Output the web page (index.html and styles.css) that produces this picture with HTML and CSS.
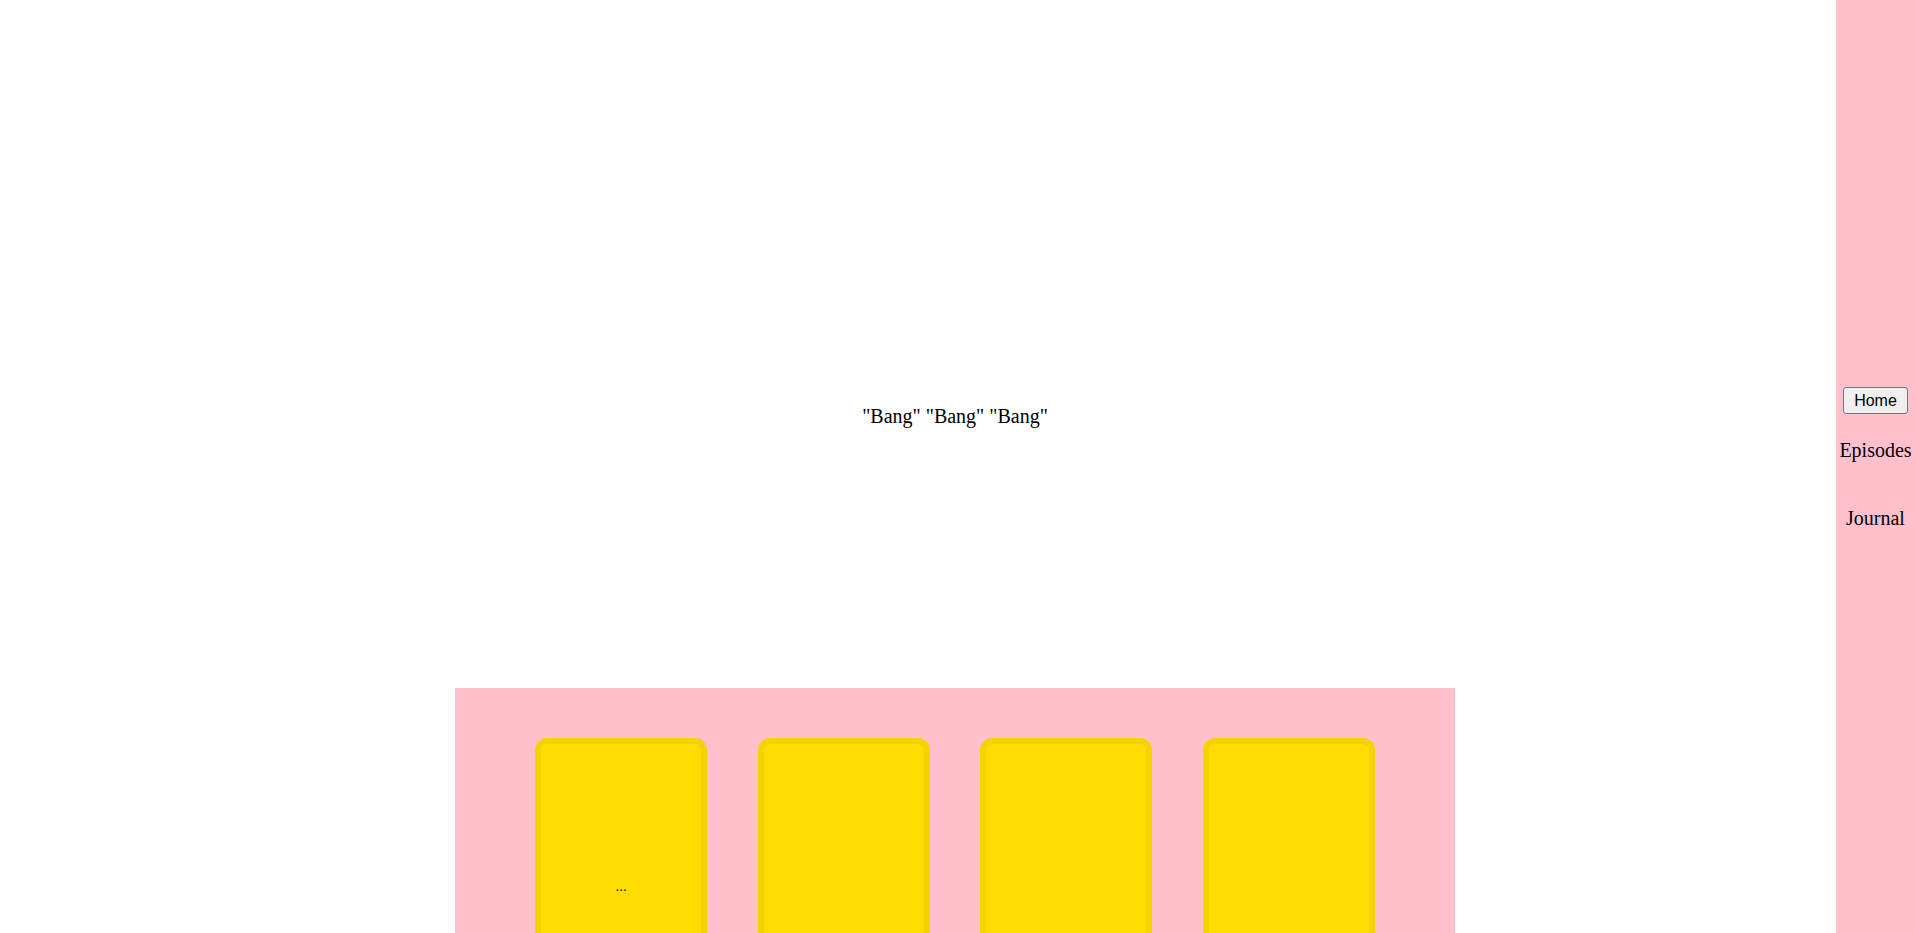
FILE: index.html
```html
<!DOCTYPE html>
<html>
<head>
<meta charset="utf-8">
<title>Bang</title>
<link rel="stylesheet" href="styles.css">
</head>
<body>
  <main class="page">
    <section class="hero">
      <p class="hero-text">"Bang" "Bang" "Bang"</p>
    </section>
    <section class="shelf">
      <div class="card"><span class="card-text">...</span></div>
      <div class="card"></div>
      <div class="card"></div>
      <div class="card"></div>
    </section>
  </main>
  <nav class="sidebar">
    <button class="home-btn" type="button">Home</button>
    <span class="nav-link nav-episodes">Episodes</span>
    <span class="nav-link nav-journal">Journal</span>
  </nav>
</body>
</html>
```

FILE: styles.css
```css
html, body {
  margin: 0;
  padding: 0;
  background: #ffffff;
}

body {
  font-family: "Liberation Serif", "Times New Roman", serif;
  color: #000;
}

.page {
  width: 1910px;
}

.hero {
  height: 688px;
  box-sizing: border-box;
  padding-top: 144px;
  display: flex;
  align-items: center;
  justify-content: center;
}

.hero-text {
  margin: 0;
  font-size: 20px;
  line-height: 23px;
}

.shelf {
  width: 1000px;
  margin: 0 auto;
  box-sizing: border-box;
  padding: 50px 80px;
  background: #ffc0cb;
  display: flex;
  justify-content: space-between;
}

.card {
  width: 172px;
  height: 300px;
  box-sizing: border-box;
  border: 6px solid #f5d300;
  border-radius: 12px;
  background: #ffdb00;
  display: flex;
  align-items: center;
  justify-content: center;
}

.card-text {
  font-size: 15px;
  line-height: 17px;
  margin-bottom: 3px;
  color: #222;
}

.sidebar {
  position: fixed;
  top: 0;
  right: 0;
  width: 79px;
  height: 100%;
  box-sizing: border-box;
  padding-bottom: 17px;
  background: #ffc0cb;
  display: flex;
  flex-direction: column;
  align-items: center;
  justify-content: center;
}

.home-btn {
  font-family: "Liberation Sans", Arial, sans-serif;
  font-size: 16px;
  line-height: 17px;
  padding: 4px 10px;
  border: 1px solid #767676;
  border-radius: 3px;
  background: #efefef;
  color: #000;
}

.nav-link {
  font-size: 20px;
  line-height: 23px;
}

.nav-episodes {
  margin-top: 25px;
}

.nav-journal {
  margin-top: 45px;
}
```
